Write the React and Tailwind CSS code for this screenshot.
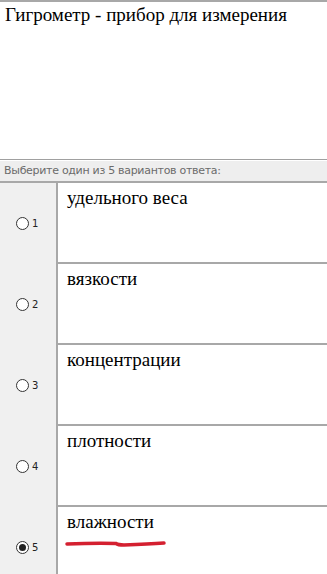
import React from "react";

const answers = [
    { n: 1, text: "удельного веса" },
    { n: 2, text: "вязкости" },
    { n: 3, text: "концентрации" },
    { n: 4, text: "плотности" },
    { n: 5, text: "влажности", checked: true },
];

const Radio = ({ checked }) => (
    <span className="w-[13px] h-[13px] rounded-full border border-[#333] bg-white flex items-center justify-center">
        {checked && <span className="w-[7px] h-[7px] rounded-full bg-[#222]" />}
    </span>
);

export default function App() {
    return (
        <div className="w-[327px] h-[574px] overflow-hidden bg-white flex flex-col border-t-2 border-[#a8a8a8]">
            <div className="h-[157px] shrink-0 px-[5px] pt-[1px] text-[19px] leading-[24px] text-black font-['Liberation_Serif',serif]">
                Гигрометр - прибор для измерения
            </div>
            <div className="shrink-0 border-t border-[#a0a0a0] border-b-2 border-b-[#a8a8a8]">
                <div className="h-[21px] bg-[#eeeeee] border-t border-white pl-[4px] flex items-center text-[11px] text-[#6b6b6b] font-['DejaVu_Sans',sans-serif] tracking-[-0.3px]">
                    Выберите один из 5 вариантов ответа:
                </div>
            </div>
            <div className="flex flex-col shrink-0">
                {answers.map((a) => (
                    <div key={a.n} className="flex h-[81px] shrink-0">
                        <div className="w-[56px] bg-[#f0f0f0] flex items-center pl-[16px] gap-[3px]">
                            <Radio checked={a.checked} />
                            <span className="text-[10px] text-[#222] font-['DejaVu_Sans',sans-serif]">
                                {a.n}
                            </span>
                        </div>
                        <div className="flex-1 border-l-2 border-[#a8a8a8] border-b-2 border-b-[#a8a8a8] pl-[9px] pt-[3px] relative">
                            <span className="text-[19px] leading-[22px] text-black font-['Liberation_Serif',serif]">
                                {a.text}
                            </span>
                            {a.checked && (
                                <svg
                                    className="absolute left-[6px] top-[32px]"
                                    width="104"
                                    height="10"
                                    viewBox="0 0 104 10"
                                >
                                    <path
                                        d="M3 5 Q30 4 52 4.5 Q54 6 60 6 Q85 5 100 4"
                                        stroke="#d42030"
                                        strokeWidth="3.5"
                                        strokeLinecap="round"
                                        fill="none"
                                    />
                                </svg>
                            )}
                        </div>
                    </div>
                ))}
            </div>
        </div>
    );
}
